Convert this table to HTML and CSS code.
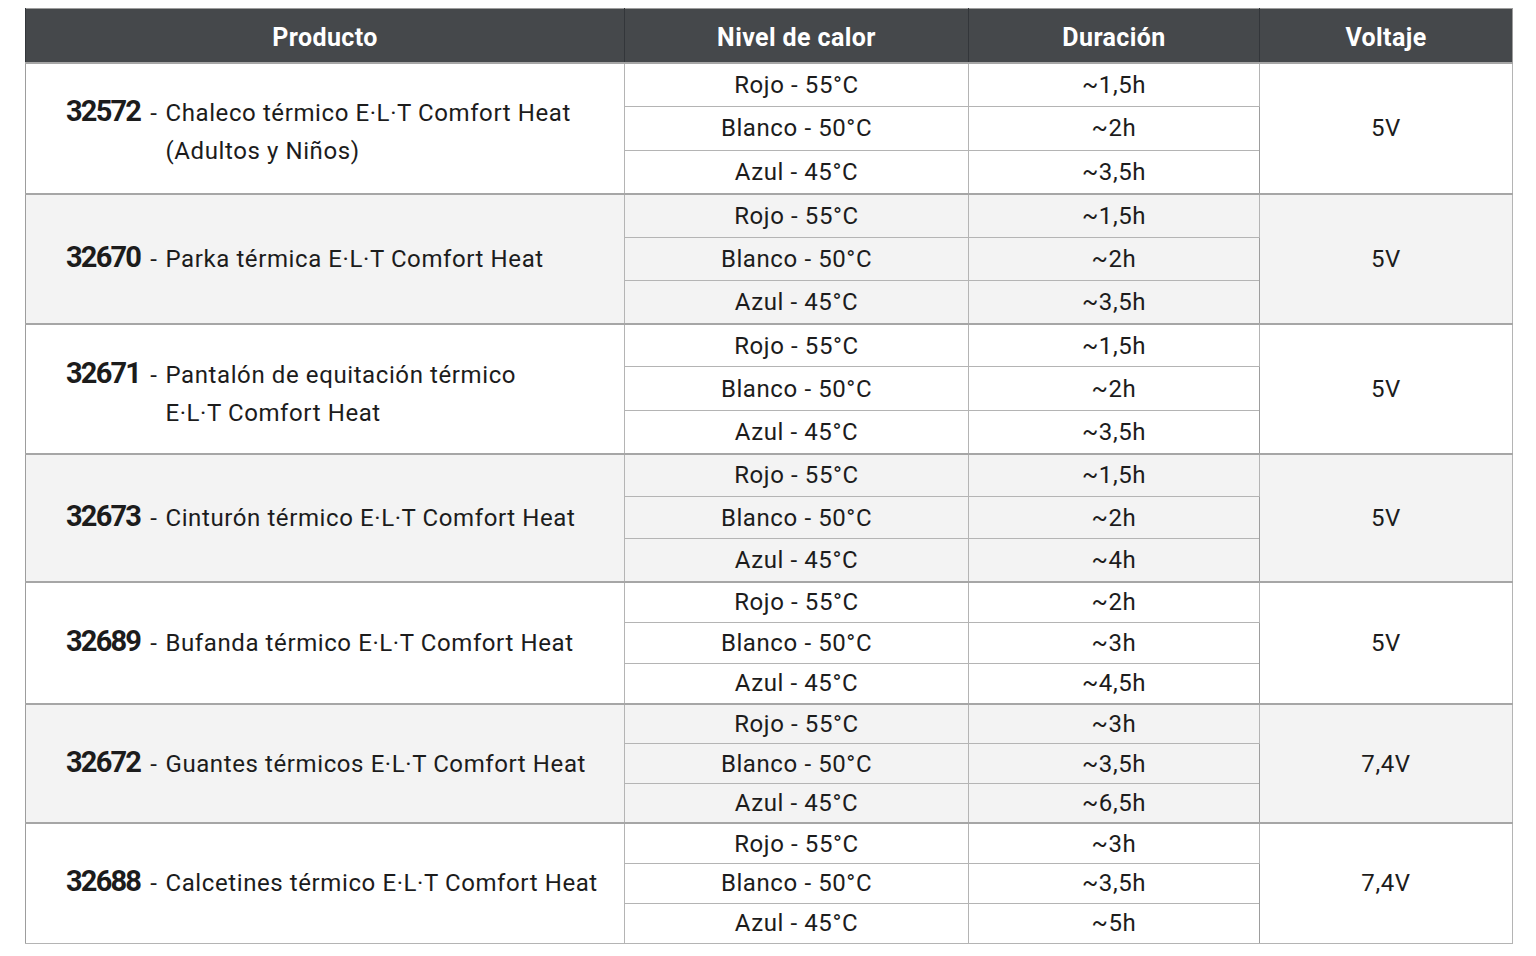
FILE: index.html
```html
<!DOCTYPE html>
<html lang="es">
<head>
<meta charset="utf-8">
<title>Tabla E·L·T Comfort Heat</title>
<link rel="stylesheet" href="styles.css">
</head>
<body>
<table class="spec">
  <colgroup>
    <col class="c-prod"><col class="c-lvl"><col class="c-dur"><col class="c-volt">
  </colgroup>
  <thead>
    <tr><th>Producto</th><th>Nivel de calor</th><th>Duración</th><th>Voltaje</th></tr>
  </thead>
  <tbody class="g g1">
    <tr><td class="prod two" rowspan="3"><div class="pwrap"><span class="code">32572</span><span class="dash">-</span><span class="desc">Chaleco térmico E·L·T Comfort Heat<br>(Adultos y Niños)</span></div></td><td>Rojo - 55°C</td><td>~1,5h</td><td class="volt" rowspan="3">5V</td></tr>
    <tr><td>Blanco - 50°C</td><td>~2h</td></tr>
    <tr><td>Azul - 45°C</td><td>~3,5h</td></tr>
  </tbody>
  <tbody class="g g2 alt">
    <tr><td class="prod" rowspan="3"><div class="pwrap"><span class="code">32670</span><span class="dash">-</span><span class="desc">Parka térmica E·L·T Comfort Heat</span></div></td><td>Rojo - 55°C</td><td>~1,5h</td><td class="volt" rowspan="3">5V</td></tr>
    <tr><td>Blanco - 50°C</td><td>~2h</td></tr>
    <tr><td>Azul - 45°C</td><td>~3,5h</td></tr>
  </tbody>
  <tbody class="g g3">
    <tr><td class="prod two" rowspan="3"><div class="pwrap"><span class="code">32671</span><span class="dash">-</span><span class="desc">Pantalón de equitación térmico<br>E·L·T Comfort Heat</span></div></td><td>Rojo - 55°C</td><td>~1,5h</td><td class="volt" rowspan="3">5V</td></tr>
    <tr><td>Blanco - 50°C</td><td>~2h</td></tr>
    <tr><td>Azul - 45°C</td><td>~3,5h</td></tr>
  </tbody>
  <tbody class="g g4 alt">
    <tr><td class="prod" rowspan="3"><div class="pwrap"><span class="code">32673</span><span class="dash">-</span><span class="desc">Cinturón térmico E·L·T Comfort Heat</span></div></td><td>Rojo - 55°C</td><td>~1,5h</td><td class="volt" rowspan="3">5V</td></tr>
    <tr><td>Blanco - 50°C</td><td>~2h</td></tr>
    <tr><td>Azul - 45°C</td><td>~4h</td></tr>
  </tbody>
  <tbody class="g g5">
    <tr><td class="prod" rowspan="3"><div class="pwrap"><span class="code">32689</span><span class="dash">-</span><span class="desc">Bufanda térmico E·L·T Comfort Heat</span></div></td><td>Rojo - 55°C</td><td>~2h</td><td class="volt" rowspan="3">5V</td></tr>
    <tr><td>Blanco - 50°C</td><td>~3h</td></tr>
    <tr><td>Azul - 45°C</td><td>~4,5h</td></tr>
  </tbody>
  <tbody class="g g6 alt">
    <tr><td class="prod" rowspan="3"><div class="pwrap"><span class="code">32672</span><span class="dash">-</span><span class="desc">Guantes térmicos E·L·T Comfort Heat</span></div></td><td>Rojo - 55°C</td><td>~3h</td><td class="volt" rowspan="3">7,4V</td></tr>
    <tr><td>Blanco - 50°C</td><td>~3,5h</td></tr>
    <tr><td>Azul - 45°C</td><td>~6,5h</td></tr>
  </tbody>
  <tbody class="g g7">
    <tr><td class="prod" rowspan="3"><div class="pwrap"><span class="code">32688</span><span class="dash">-</span><span class="desc">Calcetines térmico E·L·T Comfort Heat</span></div></td><td>Rojo - 55°C</td><td>~3h</td><td class="volt" rowspan="3">7,4V</td></tr>
    <tr><td>Blanco - 50°C</td><td>~3,5h</td></tr>
    <tr><td>Azul - 45°C</td><td>~5h</td></tr>
  </tbody>
</table>
</body>
</html>
```
FILE: styles.css
```css
html, body {
  margin: 0;
  padding: 0;
  background: #ffffff;
}
body {
  padding: 8px 0 0 25px;
  font-family: Roboto, "Liberation Sans", sans-serif;
  color: #1c1c1c;
}
.spec {
  border-collapse: collapse;
  table-layout: fixed;
  width: 1487px;
  border: 1px solid #9d9d9d;
  font-size: 24px;
  letter-spacing: 0.6px;
}
.c-prod { width: 599px; }
.c-lvl { width: 344px; }
.c-dur { width: 291px; }
.c-volt { width: 253px; }

.spec thead th {
  background: #45484b;
  color: #ffffff;
  font-weight: 700;
  font-size: 25px;
  height: 50px;
  padding: 3px 0 0 0;
  border-left: 1px solid #33363a;
  letter-spacing: 0.4px;
}
.spec td {
  padding: 0;
  text-align: center;
  vertical-align: middle;
  border: 1px solid #b4b4b4;
  border-left: 1px solid #9d9d9d;
}
.spec tbody.g tr:first-child td {
  border-top: 2px solid #a6a6a6;
}
.spec tbody.alt td {
  background: #f3f3f3;
}
.g1 tr { height: 43.6px; }
.g2 tr, .g3 tr { height: 43.3px; }
.g4 tr { height: 42.7px; }
.g5 tr { height: 40.7px; }
.g6 tr, .g7 tr { height: 39.9px; }

.spec td.prod {
  text-align: left;
  padding-left: 40px;
}
.pwrap {
  display: flex;
  align-items: baseline;
}
.code {
  font-weight: 700;
  font-size: 29px;
  letter-spacing: -1.8px;
}
.dash {
  margin: 0 8px 0 10px;
}
.desc {
  line-height: 38px;
}
.prod.two .pwrap {
  padding-top: 8px;
}
.g3 .prod.two .pwrap {
  padding-top: 11px;
}
```
